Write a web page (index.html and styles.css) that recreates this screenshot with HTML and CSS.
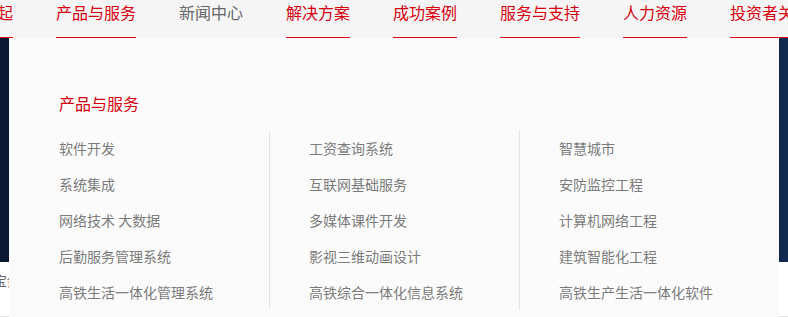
FILE: index.html
```html
<!DOCTYPE html>
<html lang="zh-CN">
<head>
<meta charset="utf-8">
<title>产品与服务</title>
<link rel="stylesheet" href="styles.css">
</head>
<body>
<nav class="nav">
  <ul class="nav-list">
    <li class="nav-item active">崛起</li>
    <li class="nav-item active">产品与服务</li>
    <li class="nav-item">新闻中心</li>
    <li class="nav-item active">解决方案</li>
    <li class="nav-item active">成功案例</li>
    <li class="nav-item active">服务与支持</li>
    <li class="nav-item active">人力资源</li>
    <li class="nav-item active">投资者关系</li>
  </ul>
</nav>
<div class="stage">
  <div class="hero"></div>
  <div class="below">
    <span class="below-text">宝剑</span>
  </div>
  <div class="dropdown">
    <h3 class="dd-title">产品与服务</h3>
    <div class="dd-cols">
      <ul class="dd-col">
        <li>软件开发</li>
        <li>系统集成</li>
        <li>网络技术 大数据</li>
        <li>后勤服务管理系统</li>
        <li>高铁生活一体化管理系统</li>
      </ul>
      <ul class="dd-col">
        <li>工资查询系统</li>
        <li>互联网基础服务</li>
        <li>多媒体课件开发</li>
        <li>影视三维动画设计</li>
        <li>高铁综合一体化信息系统</li>
      </ul>
      <ul class="dd-col">
        <li>智慧城市</li>
        <li>安防监控工程</li>
        <li>计算机网络工程</li>
        <li>建筑智能化工程</li>
        <li>高铁生产生活一体化软件</li>
      </ul>
    </div>
  </div>
</div>
</body>
</html>
```
FILE: styles.css
```css
* { box-sizing: border-box; }
html, body { margin: 0; padding: 0; }
body {
  width: 788px;
  height: 317px;
  overflow: hidden;
  font-family: "Microsoft YaHei", "Noto Sans CJK SC", sans-serif;
  background: #fbfbfb;
}
ul { list-style: none; margin: 0; padding: 0; }

.nav {
  height: 38px;
  background: #f5f5f5;
  overflow: hidden;
  white-space: nowrap;
}
.nav-list {
  display: flex;
  gap: 43px;
  margin-left: -19px;
  height: 38px;
}
.nav-item {
  flex: none;
  font-size: 16px;
  line-height: 24px;
  padding-top: 0;
  height: 38px;
  color: #666;
  border-bottom: 1px solid transparent;
}
.nav-item.active {
  color: #d7000f;
  border-bottom: 1px solid #e60012;
}

.stage {
  position: relative;
  height: 279px;
}
.hero {
  height: 224px;
  background: linear-gradient(90deg, #0a1832 0%, #0b1a37 60%, #112a50 100%);
}
.below {
  height: 55px;
  background: #fff;
  border-bottom: 1px solid #e2e2e2;
  padding-top: 8px;
}
.below-text {
  display: block;
  margin-left: -7px;
  font-size: 14px;
  line-height: 20px;
  color: #666;
}

.dropdown {
  position: absolute;
  left: 9px;
  top: 0;
  width: 770px;
  height: 290px;
  background: #fbfbfb;
  padding: 53px 10px 0 10px;
}
.dd-title {
  margin: 0 0 15px 40px;
  font-size: 16px;
  line-height: 24px;
  font-weight: normal;
  color: #d7000f;
}
.dd-cols {
  display: grid;
  grid-template-columns: 250px 250px 250px;
}
.dd-col {
  padding-left: 40px;
}
.dd-col + .dd-col {
  border-left: 1px solid #e3e3e3;
  padding-left: 39px;
}
.dd-col li {
  height: 36px;
  line-height: 36px;
  font-size: 14px;
  color: #7b7b7b;
  white-space: nowrap;
}
```
